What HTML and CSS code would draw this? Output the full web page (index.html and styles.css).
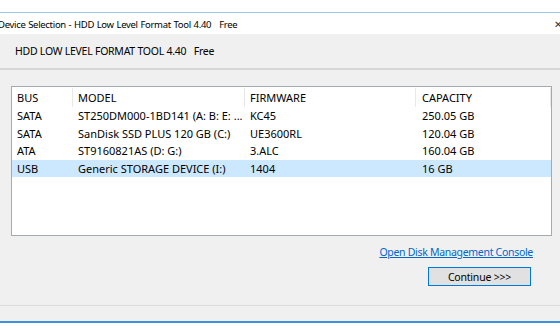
FILE: index.html
```html
<!DOCTYPE html>
<html>
<head>
<meta charset="utf-8">
<link rel="stylesheet" href="styles.css">
</head>
<body>
<div class="top-space"></div>
<div class="window">
  <div class="titlebar">
    <span class="title">Device Selection - HDD Low Level Format Tool 4.40&nbsp;&nbsp;&nbsp;Free</span>
    <span class="close">✕</span>
  </div>
  <div class="header">HDD LOW LEVEL FORMAT TOOL 4.40&nbsp;&nbsp;&nbsp;Free</div>
  <div class="content">
    <div class="listbox">
      <div class="row head">
        <div class="cell">BUS</div>
        <div class="cell">MODEL</div>
        <div class="cell">FIRMWARE</div>
        <div class="cell"></div>
        <div class="cell">CAPACITY</div>
      </div>
      <div class="row">
        <div class="cell">SATA</div>
        <div class="cell">ST250DM000-1BD141 (A: B: E: ...</div>
        <div class="cell">KC45</div>
        <div class="cell"></div>
        <div class="cell">250.05 GB</div>
      </div>
      <div class="row">
        <div class="cell">SATA</div>
        <div class="cell">SanDisk SSD PLUS 120 GB (C:)</div>
        <div class="cell">UE3600RL</div>
        <div class="cell"></div>
        <div class="cell">120.04 GB</div>
      </div>
      <div class="row">
        <div class="cell">ATA</div>
        <div class="cell">ST9160821AS (D: G:)</div>
        <div class="cell">3.ALC</div>
        <div class="cell"></div>
        <div class="cell">160.04 GB</div>
      </div>
      <div class="row selected">
        <div class="cell">USB</div>
        <div class="cell">Generic STORAGE DEVICE (I:)</div>
        <div class="cell">1404</div>
        <div class="cell"></div>
        <div class="cell">16 GB</div>
      </div>
    </div>
    <div class="actions">
      <a class="link" href="#">Open Disk Management Console</a>
      <button class="btn">Continue &gt;&gt;&gt;</button>
    </div>
  </div>
  <div class="footer"></div>
</div>
</body>
</html>
```

FILE: styles.css
```css
html, body {
  margin: 0;
  padding: 0;
  background: #ffffff;
  overflow: hidden;
}
body {
  width: 560px;
  height: 336px;
  font-family: "Noto Sans", "Open Sans", sans-serif;
  font-size: 11px;
  color: #000;
}
.top-space {
  height: 12px;
}
.window {
  border-top: 1px solid #99c9ef;
  border-bottom: 2px solid #3b93df;
  background: #f0f0f0;
}
.titlebar {
  height: 21px;
  background: #fff;
  display: flex;
  align-items: center;
  justify-content: space-between;
  padding-top: 1px;
  box-sizing: border-box;
}
.title {
  margin-left: -2px;
  white-space: nowrap;
  font-size: 9.5px;
  letter-spacing: -0.3px;
  word-spacing: 0.5px;
}
.close {
  font-size: 10px;
  color: #333;
  margin-right: -2px;
  line-height: 1;
}
.header {
  display: flex;
  align-items: center;
  padding-left: 15px;
  border-bottom: 2px solid #d7d7d7;
  box-sizing: border-box;
  height: 36px;
  white-space: nowrap;
  font-size: 10.5px;
  letter-spacing: -0.25px;
}
.content {
  padding: 16px 0 0 11px;
  height: 236px;
  box-sizing: border-box;
  border-bottom: 1px solid #dcdcdc;
}
.listbox {
  width: 541px;
  height: 150px;
  box-sizing: border-box;
  border: 1px solid #a5a9b0;
  background: #fff;
}
.row {
  display: grid;
  grid-template-columns: 61px 172px 70px 101px 135px;
  height: 17.5px;
  align-items: center;
}
.row.head {
  height: 19px;
  margin-top: 1px;
}
.row.head .cell {
  border-right: 1px solid #e8e8e8;
  height: 19px;
  line-height: 19px;
}
.row.head .cell:nth-child(3) {
  border-right-color: #ffffff;
}
.cell {
  padding-left: 5px;
  white-space: nowrap;
  box-sizing: border-box;
}
.row .cell:nth-child(5) {
  padding-left: 6px;
}
.row.selected {
  background: #cce8ff;
}
.actions {
  display: flex;
  flex-direction: column;
  align-items: flex-end;
  width: 541px;
  box-sizing: border-box;
}
.link {
  margin-top: 8px;
  color: #0066cc;
  text-decoration: underline;
  line-height: 16px;
  margin-right: 19px;
  font-size: 10.5px;
  letter-spacing: -0.3px;
}
.btn {
  margin-top: 7px;
  width: 103px;
  height: 19px;
  border: 1px solid #0078d7;
  background: #e1e1e1;
  font-family: inherit;
  font-size: 10.5px;
  letter-spacing: -0.2px;
  padding: 0;
  color: #000;
  margin-right: 21px;
}
.footer {
  height: 15px;
}
```
